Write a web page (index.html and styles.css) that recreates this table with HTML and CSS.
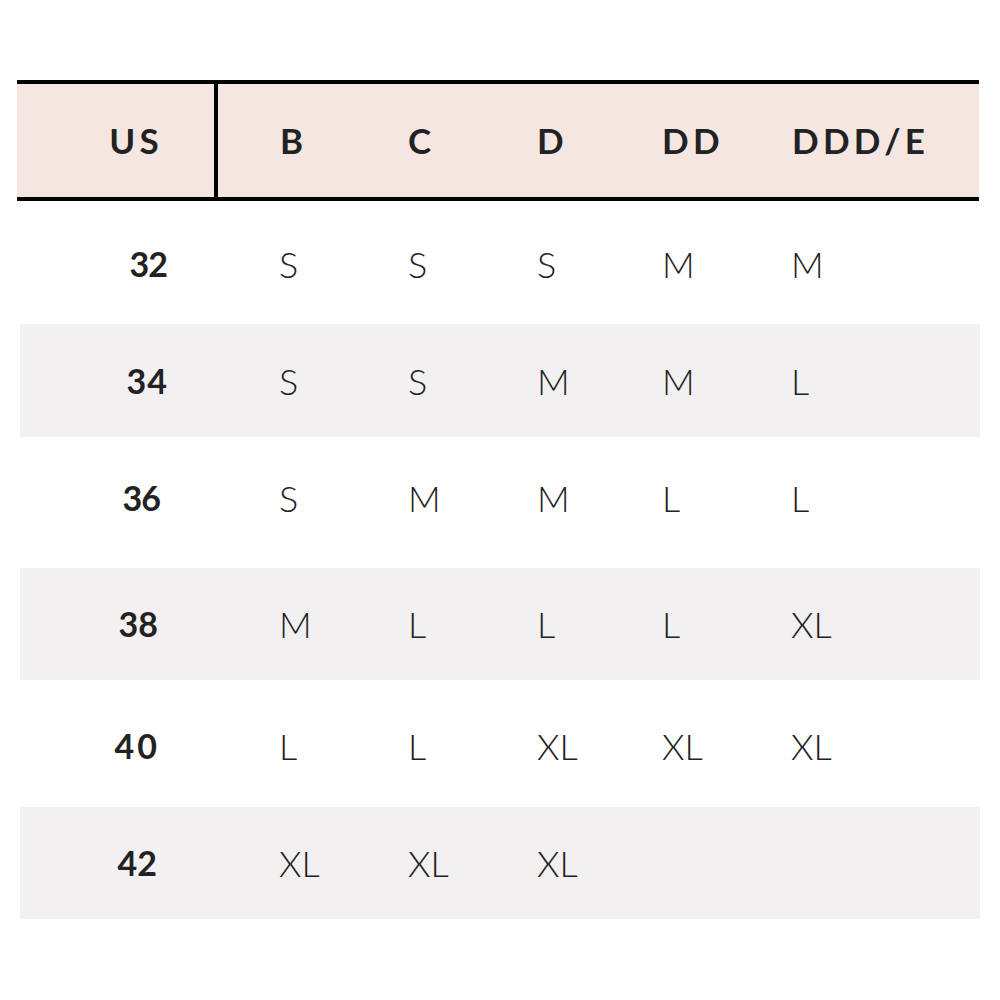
FILE: index.html
```html
<!DOCTYPE html>
<html>
<head>
<meta charset="utf-8">
<link rel="stylesheet" href="styles.css">
</head>
<body>
<div class="chart">
  <div class="head">
    <div class="hcell us">US</div>
    <div class="hcell first">B</div>
    <div class="hcell">C</div>
    <div class="hcell">D</div>
    <div class="hcell">DD</div>
    <div class="hcell">DDD/E</div>
  </div>
  <div class="row r1"><div class="num">32</div><div>S</div><div>S</div><div>S</div><div>M</div><div>M</div></div>
  <div class="row r2 shade"><div class="num">34</div><div>S</div><div>S</div><div>M</div><div>M</div><div>L</div></div>
  <div class="row r3"><div class="num">36</div><div>S</div><div>M</div><div>M</div><div>L</div><div>L</div></div>
  <div class="row r4 shade"><div class="num">38</div><div>M</div><div>L</div><div>L</div><div>L</div><div>XL</div></div>
  <div class="row r5"><div class="num">40</div><div>L</div><div>L</div><div>XL</div><div>XL</div><div>XL</div></div>
  <div class="row r6 shade"><div class="num">42</div><div>XL</div><div>XL</div><div>XL</div><div></div><div></div></div>
</div>
</body>
</html>
```

FILE: styles.css
```css
html, body {
  margin: 0;
  padding: 0;
  background: #ffffff;
}
body {
  font-family: "Lato", "Open Sans", sans-serif;
  color: #222222;
}
.chart {
  padding-top: 80px;
  padding-left: 17px;
  width: 963px;
}
.head {
  display: grid;
  grid-template-columns: 201px 190px 129px 125px 130px 1fr;
  width: 962px;
  height: 113px;
  background: #f5e6e2;
  border-top: 4px solid #000;
  border-bottom: 4px solid #000;
  align-items: center;
}
.hcell {
  font-weight: 700;
  font-size: 35px;
  letter-spacing: 4.3px;
  line-height: 1;
}
.hcell.us {
  height: 100%;
  box-sizing: border-box;
  border-right: 4px solid #000;
  display: flex;
  align-items: center;
  justify-content: flex-end;
  padding-right: 51px;
}
.hcell.first {
  padding-left: 62px;
}
.row {
  display: grid;
  grid-template-columns: 260px 129px 129px 125px 129px 1fr;
  width: 960px;
  margin-left: 3px;
  align-items: center;
  font-size: 36px;
  font-weight: 300;
  line-height: 1;
  box-sizing: border-box;
}
.row > div:not(.num) {
  margin-left: -1px;
}
.row.shade {
  background: #f2f0f1;
}
.num {
  font-weight: 700;
  font-size: 34px;
  letter-spacing: -1px;
  text-align: right;
}
.r1 { height: 123px; padding-top: 2px; }
.r2 { height: 113px; }
.r3 { height: 131px; padding-bottom: 10px; }
.r4 { height: 112px; }
.r5 { height: 127px; padding-top: 5px; }
.r6 { height: 112px; }
.r1 .num { padding-right: 113px; }
.r2 .num { padding-right: 112px; letter-spacing: 1px; }
.r3 .num { padding-right: 120px; }
.r4 .num { padding-right: 122px; letter-spacing: 0; }
.r5 .num { padding-right: 120px; letter-spacing: 3px; }
.r6 .num { padding-right: 123px; letter-spacing: 0; }
```
